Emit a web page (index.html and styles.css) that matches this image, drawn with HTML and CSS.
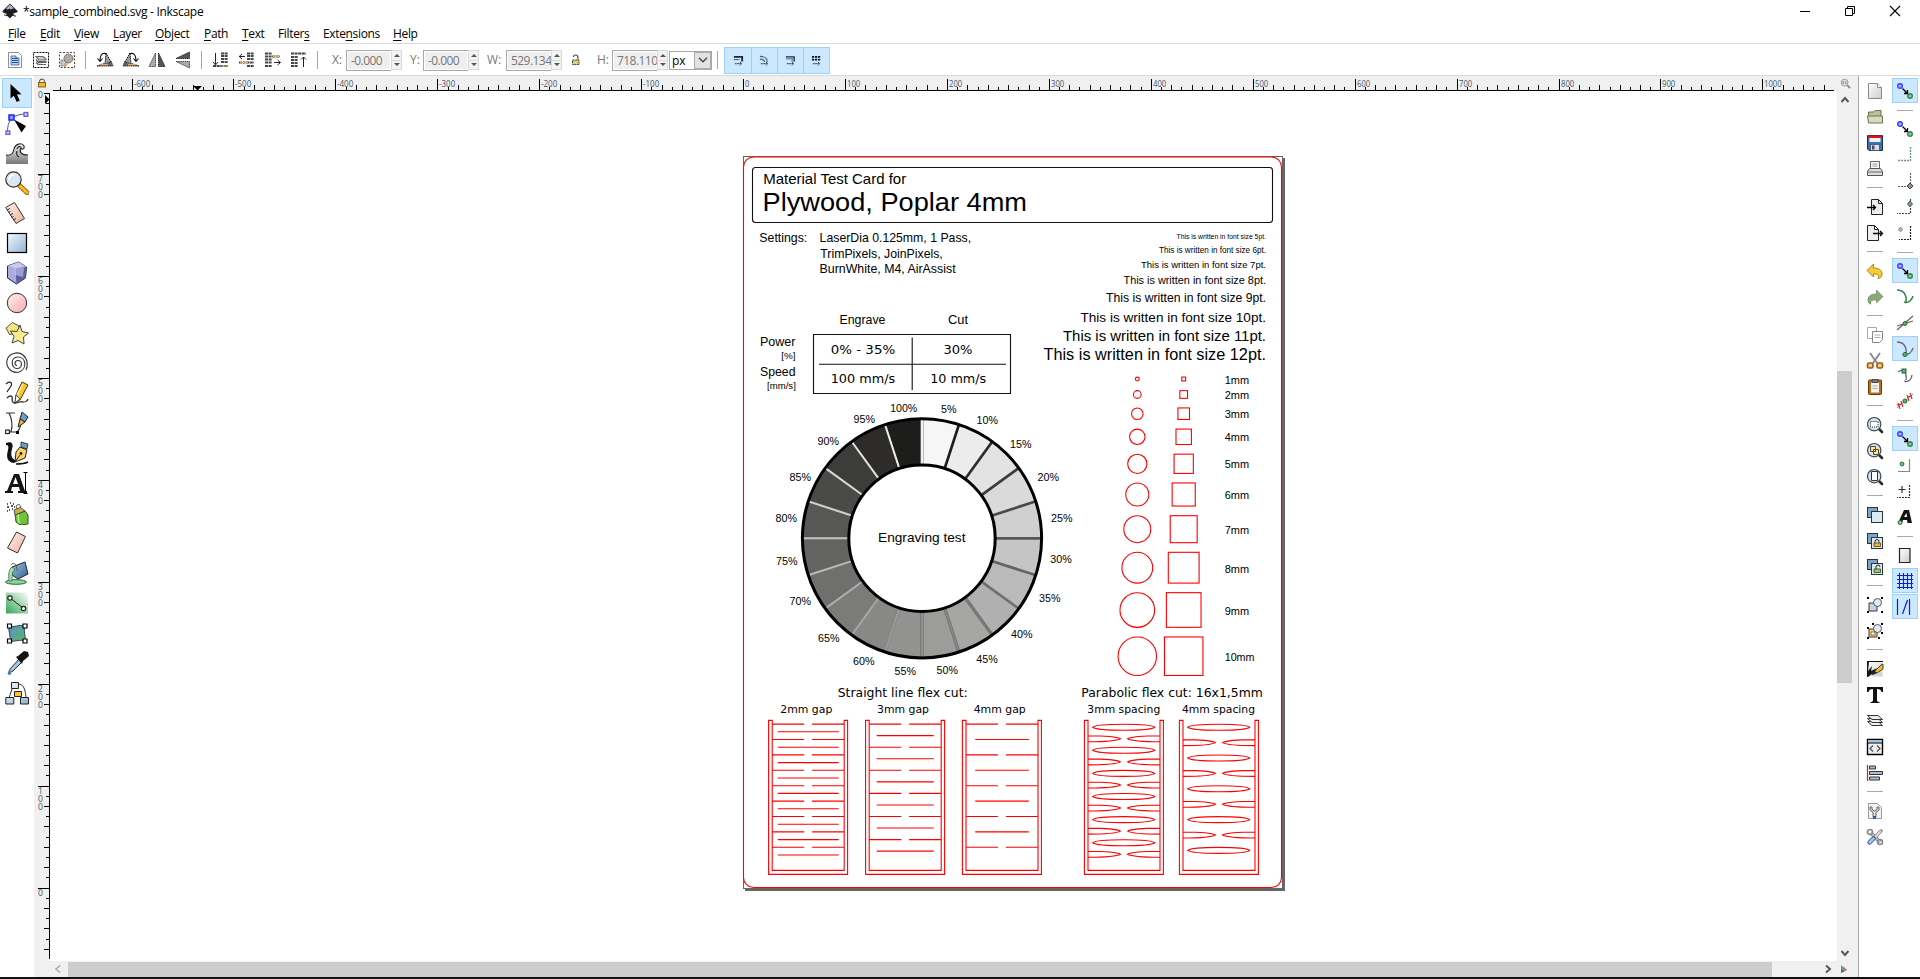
FILE: index.html
```html
<!DOCTYPE html>
<html lang="en">
<head>
<meta charset="utf-8">
<title>*sample_combined.svg - Inkscape</title>
<link rel="stylesheet" href="styles.css">
</head>
<body>
<svg class="defs" width="0" height="0">
  <defs>
    <linearGradient id="gBlue" x1="0" y1="0" x2="1" y2="1"><stop offset="0" stop-color="#f4f9fd"/><stop offset="1" stop-color="#8fb2d2"/></linearGradient>
    <linearGradient id="gSteel" x1="0" y1="0" x2="1" y2="1"><stop offset="0" stop-color="#9cc4e4"/><stop offset="1" stop-color="#2e5f8a"/></linearGradient>
    <linearGradient id="gPink" x1="0" y1="0" x2="1" y2="1"><stop offset="0" stop-color="#fff0f0"/><stop offset="1" stop-color="#f9a9b0"/></linearGradient>
    <linearGradient id="gPeach" x1="0" y1="0" x2="1" y2="1"><stop offset="0" stop-color="#fff3ef"/><stop offset="1" stop-color="#eeb09c"/></linearGradient>
    <linearGradient id="gGreen" x1="1" y1="0" x2="0" y2="1"><stop offset="0" stop-color="#fff"/><stop offset="1" stop-color="#35a555"/></linearGradient>
    <linearGradient id="gMesh" x1="0" y1="0" x2="1" y2="1"><stop offset="0" stop-color="#5d8fc4"/><stop offset="1" stop-color="#5bb86b"/></linearGradient>
    <linearGradient id="gGray" x1="0" y1="0" x2="0" y2="1"><stop offset="0" stop-color="#eee"/><stop offset="1" stop-color="#777"/></linearGradient>
    <linearGradient id="gPage" x1="0" y1="0" x2="1" y2="1"><stop offset="0" stop-color="#fff"/><stop offset="1" stop-color="#ccc"/></linearGradient>
    <symbol id="snap" viewBox="0 0 18 18"><circle cx="4" cy="4" r="2.3" fill="#aab4ff" stroke="#3d3dff" stroke-width="1.4"/><circle cx="14" cy="14" r="2.3" fill="#8fc79b" stroke="#2c8a45" stroke-width="1.4"/><path d="M6.5 6.5 11 11M11.5 8v3.5H8" fill="none" stroke="#000" stroke-width="1.3"/></symbol>
    <symbol id="glass" viewBox="0 0 18 18"><path d="m12.5 12.5 3.5 3.5" stroke="#222a30" stroke-width="2.6" stroke-linecap="round"/><circle cx="8.2" cy="8.2" r="6.7" fill="#d8e6f2" stroke="#3a4650" stroke-width="1.2"/></symbol>
    <symbol id="rot" viewBox="0 0 18 18"><path d="M1 15h16l-2-5z" fill="#666" stroke="#222" stroke-width=".9" stroke-dasharray="1.5 .7"/><path d="M9 13 10 2l5 9z" fill="#999" stroke="#222" stroke-dasharray="1.5 .7"/><path d="M11 3C6 1 4 4 4 10M1.500 7.500 4 10.500l2.500-3" fill="none" stroke="#111" stroke-width="1.100"/><path d="M5 13.500h7" stroke="#e8b04c" stroke-width="1.500"/></symbol>
    <symbol id="flip" viewBox="0 0 18 18"><path d="M7.500 2v13.500H1z" fill="#aaa" stroke="#444" stroke-dasharray="1.5 .7"/><path d="M10.500 2v13.500H17z" fill="#555" stroke="#222" stroke-dasharray="1.5 .7"/></symbol>
    <symbol id="layers" viewBox="0 0 18 18"><rect x="1.500" y="1.500" width="10" height="10" fill="#7fa3c4" stroke="#26353f"/><rect x="5.500" y="5.500" width="11" height="11" fill="#dbe9f5" stroke="#26353f"/></symbol>
  </defs>
</svg>

<header class="titlebar">
  <svg class="logo" viewBox="0 0 16 16"><path d="M8 .5 15.500 8c.6 1-.5 1.500-2 1.800l-2.500 1 2 1.700-2.800.5L8 15.500l-2.300-2.200L3 12.800 5 11 1.500 9.700C.5 9 .2 8.500.8 7.800z" fill="#1d1d1f"/><path d="M8 1.500 4 5.800l2 .6 1.500-1L9 6.600l1.800-1 1.200-.2z" fill="#a8b8cc"/><path d="M12 13h2M2 12h1.500" stroke="#333"/></svg>
  <span class="title">*sample_combined.svg - Inkscape</span>
  <span class="winbtns">
    <svg viewBox="0 0 12 12"><path d="M1 6.500h10" stroke="#000"/></svg>
    <svg viewBox="0 0 12 12"><path d="M1.500 3.500h7v7h-7zM3.500 3.500v-2h7v7h-2" fill="none" stroke="#000"/></svg>
    <svg viewBox="0 0 12 12"><path d="m1 1 10 10M11 1 1 11" stroke="#000" stroke-width="1.100"/></svg>
  </span>
</header>

<nav class="menubar">
  <span><u>F</u>ile</span><span><u>E</u>dit</span><span><u>V</u>iew</span><span><u>L</u>ayer</span><span><u>O</u>bject</span><span><u>P</u>ath</span><span><u>T</u>ext</span><span>Filter<u>s</u></span><span>Exte<u>n</u>sions</span><span><u>H</u>elp</span>
</nav>

<section class="options">
  <svg class="oi" viewBox="0 0 18 18"><path d="M2.500 1.500h10l3 3v12h-13z" fill="#fff" stroke="#8a8f96"/><path d="M5 5h5v2h3v7H5z" fill="#bcd3f2" stroke="#2c5ea8" stroke-width=".8"/><path d="M6 7.500h6M6 9.500h6M6 11.500h6" stroke="#1d4fa0"/></svg>
  <svg class="oi" viewBox="0 0 18 18"><rect x="1.500" y="1.500" width="15" height="15" fill="none" stroke="#000" stroke-dasharray="2 1"/><path d="M4 5.500h7l3 2.500v1H7zM4 8.500l2 2h8v1H6zM4 11.500l2 2h8" fill="#ccc" stroke="#666" stroke-width="1.100"/></svg>
  <svg class="oi" viewBox="0 0 18 18"><rect x="1.500" y="1.500" width="15" height="15" fill="none" stroke="#8a3030" stroke-dasharray="2 1.500"/><path d="M3 15V9h5v6z" fill="#ccc" stroke="#666" stroke-dasharray="1.500 .7"/><circle cx="10.500" cy="7.500" r="4.500" fill="#aaa" stroke="#555" stroke-dasharray="1.500 .7"/><path d="M6 13h4" stroke="#e8b04c" stroke-width="1.500"/></svg>
  <i class="vs"></i>
  <svg class="oi"><use href="#rot"/></svg>
  <svg class="oi mirror"><use href="#rot"/></svg>
  <svg class="oi"><use href="#flip"/></svg>
  <svg class="oi quarter"><use href="#flip"/></svg>
  <i class="vs"></i>
  <svg class="oi" viewBox="0 0 18 18"><path d="M3.500 2v11M1 11l2.500 3L6 11" fill="none" stroke="#222"/><path d="M9 2.500h7M9 5h7M9 8h7M9 11h7M1 15h15" stroke="#444" stroke-width="2" stroke-dasharray="3 .6"/><path d="M9 15h6" stroke="#e8b04c"/></svg>
  <svg class="oi" viewBox="0 0 18 18"><path d="M1 5.500h6M4 3 1.200 5.500 4 8" fill="none" stroke="#222"/><path d="M9 2.500h7M9 5h7M9 8h7M1 11.500h15M9 15h7" stroke="#444" stroke-width="2" stroke-dasharray="3 .6"/><path d="M2 11.500h8" stroke="#e8b04c"/></svg>
  <svg class="oi" viewBox="0 0 18 18"><path d="M10 11.500h6M13.500 9l3 2.500-3 2.500" fill="none" stroke="#222"/><path d="M1 2.500h7M1 5.500h15M1 8.500h7M1 11.500h7M1 15h7" stroke="#444" stroke-width="2" stroke-dasharray="3 .6"/><path d="M9 5.500h6" stroke="#e8b04c"/></svg>
  <svg class="oi" viewBox="0 0 18 18"><path d="M13.500 16V6M11 8.500 13.500 6 16 8.500" fill="none" stroke="#222"/><path d="M1 2.500h15M1 6h7M1 9h7M1 12h7M1 15h7" stroke="#444" stroke-width="2" stroke-dasharray="3 .6"/></svg>
  <i class="vs"></i>
  <label class="lx">X:</label><span class="entry">-0.000</span><span class="spin"><i></i><i></i></span>
  <label class="ly">Y:</label><span class="entry">-0.000</span><span class="spin"><i></i><i></i></span>
  <label class="lw">W:</label><span class="entry">529.134</span><span class="spin"><i></i><i></i></span>
  <svg class="olock" viewBox="0 0 10 12"><path d="M2.500 3a2.200 2 0 0 1 4.400 0V5.500" fill="none" stroke="#444" stroke-width="1.200"/><path d="M1.500 6h6.500v4.500H1.500z" fill="#e0cf70" stroke="#444" stroke-dasharray="2 .7"/></svg>
  <label class="lh">H:</label><span class="entry">718.110</span><span class="spin"><i></i><i></i></span>
  <span class="combo"><b>px</b><em><svg viewBox="0 0 10 6"><path d="m1 .8 4 4 4-4" fill="none" stroke="#444" stroke-width="1.300"/></svg></em></span>
  <i class="vs v4"></i>
  <span class="toggles">
    <span><svg viewBox="0 0 12 12"><path d="M1 2h9v5" fill="none" stroke="#1c2733" stroke-width="2"/><path d="M1 5h6M2 9.500h7M7.500 7.500l2 2-2 2" fill="none" stroke="#1c2733" stroke-dasharray="2 .5"/></svg></span>
    <span><svg viewBox="0 0 12 12"><path d="M1 1.500c5 0 8 2 8 6M1 4.500c3 0 5 1 5 3" fill="none" stroke="#4c6074" stroke-width="1.200"/><path d="M2 9.500h7M7.500 7.500l2 2-2 2" fill="none" stroke="#1c2733" stroke-dasharray="2 .5"/></svg></span>
    <span><svg viewBox="0 0 12 12"><path d="M1 2h9v5" fill="none" stroke="#1c2733" stroke-width="1.500"/><path d="M1 3h8v4H7V5H1z" fill="#7894b0"/><path d="M2 9.500h7M7.500 7.500l2 2-2 2" fill="none" stroke="#1c2733" stroke-dasharray="2 .5"/></svg></span>
    <span><svg viewBox="0 0 12 12"><path d="M1 2h9M1 5h9" stroke="#111" stroke-width="2" stroke-dasharray="2.500 .8"/><path d="M2 9.500h7M7.500 7.500l2 2-2 2" fill="none" stroke="#1c2733" stroke-dasharray="2 .5"/></svg></span>
  </span>
</section>

<main class="work">
  <aside class="toolbox">
    <span class="tool on"><svg viewBox="0 0 24 24"><path d="M5.500 3v14.500l3.300-2.800 3 6.300 3-1.400-3-6 4.700-.4z" fill="#000"/></svg></span>
    <span class="tool"><svg viewBox="0 0 24 24"><path d="M2.500 20C3 11 5 4 20 3" fill="none" stroke="#555"/><path d="m9 8.500 12 6.500-4.500 6.500z" fill="#000"/><rect x="4" y="4" width="5" height="5" fill="#7fa0ff" stroke="#2020f0" stroke-width="1.500"/><rect x="19" y="1.500" width="3.800" height="3.800" fill="#ccd" stroke="#5a5af0" stroke-width="1.300"/><rect x="1" y="20" width="3.800" height="3.500" fill="#ccd" stroke="#5a5af0" stroke-width="1.300"/></svg></span>
    <span class="tool"><svg viewBox="0 0 24 24"><path d="M1 14c5 1 7-1 8-6 1-4 7-6 10-3 2 2 0 5-2 3-2 3 0 6 6 6v9H1z" fill="url(#gGray)"/><path d="M1 14c5 1 7-1 8-6 1-5 8-7 10-3 1 3-2 4-3 2-2 3-1 7 7 7M12 10c-1 3 0 5 2 6M12 8c1-3 4-3 4-1" fill="none" stroke="#222" stroke-width="1.100"/></svg></span>
    <span class="tool"><svg viewBox="0 0 24 24"><path d="m14.500 14.500 7.500 7" stroke="#9a6a10" stroke-width="5" stroke-linecap="round"/><path d="m15 15 7 6.500" stroke="#fbb829" stroke-width="3" stroke-linecap="round"/><circle cx="8.500" cy="8.500" r="7.700" fill="#dbe8f4" stroke="#333" stroke-width="1.200"/><path d="M4 9c0-3 2-5 5-5" fill="none" stroke="#fff" stroke-width="1.500"/></svg></span>
    <span class="tool"><svg viewBox="0 0 24 24"><path d="M.7 6.500 9.500 1.500l10 16-8.500 5z" fill="url(#gPeach)" stroke="#333"/><path d="m2 9 3-1.500M3.500 11.500l2-1M5 14l3-1.500M6.500 16.500l2-1M8 19l3-1.500" stroke="#333"/></svg></span>
    <span class="tool"><svg viewBox="0 0 24 24"><rect x="2.500" y="2.500" width="19" height="19" fill="url(#gBlue)" stroke="#000" stroke-width="1.200"/></svg></span>
    <span class="tool"><svg viewBox="0 0 24 24"><path d="m2.500 5 11-4 8 5-1 11-9 6-9-6z" fill="#aaaadf" stroke="#222250"/><path d="m2.500 5 8 2 11-1-8-5z" fill="#c8c8f0"/><path d="m10.500 7 11-1-1 11-9 6z" fill="#5c5c9e"/><path d="m9 5 10 2-1 9-8-2z" fill="#d6d6f2" opacity=".55"/></svg></span>
    <span class="tool"><svg viewBox="0 0 24 24"><circle cx="12" cy="12" r="9.700" fill="url(#gPink)" stroke="#333"/></svg></span>
    <span class="tool"><svg viewBox="0 0 24 24"><path d="M7.500 1.500 14 5l-1.500 7.500-8 1L1 7z" fill="#f5e680" stroke="#555"/><path d="m15 4 2 6.500 6.500 1.500-5 4 .5 7-6-3.500-6 2.500L9 15.500 5.500 10l6.500.5z" fill="#fbe98e" stroke="#444"/></svg></span>
    <span class="tool"><svg viewBox="0 0 24 24"><path d="M12 14.500c-3-.5-2.500-5 1-5 5 0 4.500 8-1 8C5.500 17.500 5.500 6.300 12.500 6c9-.4 10 12.500 1.500 15C5.500 23 .8 15 2 9.500 3.500 2 13 0 18 4c5 4 5 11 3 15" fill="none" stroke="#333" stroke-width="1.100"/></svg></span>
    <span class="tool"><svg viewBox="0 0 24 24"><path d="M1 3c3-3 7-2 5 2-1 2-3 4-4 6M2 17c4-4 6-2 5 2 0 3 3 4 7 2 4-1 7 2 9-3" fill="none" stroke="#222" stroke-width="1.200"/><path d="m17 1 6 3-8 15-5 3 1-8z" fill="#fbc52e" stroke="#4a3a10"/><path d="m11 14 4 4-5 4z" fill="#fff" stroke="#222" stroke-width=".7"/><path d="m18 3-6 11" stroke="#fff2b0" stroke-width="1.500"/></svg></span>
    <span class="tool"><svg viewBox="0 0 24 24"><path d="M1 2h9M4 2c3 6 4 12 2 19M3 21h9c3-3 4-7 3-10" fill="none" stroke="#333" stroke-width="1.200"/><path d="m17 1 6 5-3 5-5-3z" fill="#6d9cc8" stroke="#222"/><path d="m15 8 5 3-7 5z" fill="#eab33c" stroke="#222"/><rect x=".7" y="19" width="3.600" height="3.600" fill="#fff" stroke="#000"/><path d="M11 20h3v3h-3z" fill="#000"/></svg></span>
    <span class="tool"><svg viewBox="0 0 24 24"><path d="M1 2c5-2 8 0 6 6-2 7 0 10 5 12l-3 2C2 21 1 16 3 9c1-4 0-5-2-5z" fill="#111"/><path d="m16 1 7 2-1 5-6-2z" fill="#6d9cc8" stroke="#222" stroke-width=".8"/><path d="m15 6 7 3-2 8-10 4 1-10z" fill="#fbd268" stroke="#222"/><path d="m10 21 5-7" stroke="#222"/><circle cx="16" cy="12.500" r="1.400" fill="#222"/><path d="M11 23c5 0 8 0 12-2" fill="none" stroke="#111" stroke-width="1.500"/></svg></span>
    <span class="tool"><svg viewBox="0 0 24 24"><path d="M0 22v-2h2L9 3h5l6 17h2v2h-9v-2h2l-1-4H7l-1 4h2v2zM8 13h5l-2.400-7z" fill="#151515"/><path d="M18.500 1.500h4M18.500 22.500h4M20.500 2v20" stroke="#000"/></svg></span>
    <span class="tool"><svg viewBox="0 0 24 24"><path d="m10 14 10-4 3 4v9l-8 1-4-3z" fill="#6fc23c" stroke="#2e5d16"/><path d="m13 13 1 9" stroke="#b9ee8e" stroke-width="1.500"/><path d="m9 9 6-3 5 4-10 4z" fill="#c9ad4e" stroke="#333" stroke-width=".8"/><path d="m11 5 3-2 2 3-4 2z" fill="#eee" stroke="#333" stroke-width=".7"/><path d="M2 3h1M5 2h1M8 3h1M2 6h2M6 5h2M9 6h1M4 9h1M7 8h1M2 10h1" stroke="#222" stroke-width="1.500"/></svg></span>
    <span class="tool"><svg viewBox="0 0 24 24"><path d="m11.500 1 9 4.500-8 16.500-10-5z" fill="url(#gPeach)" stroke="#333"/></svg></span>
    <span class="tool"><svg viewBox="0 0 24 24"><ellipse cx="11" cy="21" rx="10.500" ry="2.300" fill="#8ed3a0" stroke="#23683a"/><path d="M7 6 20 1l3 12-10 5-6-4z" fill="url(#gSteel)" stroke="#223"/><path d="M6 4c3-4 6 0 6 6" fill="none" stroke="#555"/><path d="M7 6C4 8 3 13 4 20h3c0-5 0-9 3-12z" fill="#a8dcb4" stroke="#23683a" stroke-width=".7"/></svg></span>
    <span class="tool"><svg viewBox="0 0 24 24"><rect x="1" y="1.500" width="22" height="21" fill="url(#gGreen)"/><path d="m5 7 13 10" stroke="#222"/><circle cx="5" cy="7" r="2.200" fill="#fff" stroke="#222" stroke-width="1.200"/><circle cx="18.500" cy="17.500" r="2.200" fill="#fff" stroke="#222" stroke-width="1.200"/></svg></span>
    <span class="tool"><svg viewBox="0 0 24 24"><path d="M4 5c5 2 10-2 16 0-2 6 1 9 0 15-5-2-10 1-15 0 1-5-2-10-1-15z" fill="url(#gMesh)" stroke="#245"/><g fill="#fff" stroke="#000" stroke-width="1.200"><path d="M2.500 3h4v4h-4zM18 3h4v4h-4zM2.500 18h4v4h-4zM18 18h4v4h-4z"/></g></svg></span>
    <span class="tool"><svg viewBox="0 0 24 24"><path d="m14 8-9 10-2 5 5-3 9-9z" fill="#9cc4e4" stroke="#333"/><path d="m11 6 2-1 6-5 4 1 1 4-6 5-1 3z" fill="#151515"/><path d="M5 19c2 3 1 5-.5 5S2 22 5 19z" fill="#4f86bd"/></svg></span>
    <span class="tool"><svg viewBox="0 0 24 24"><path d="M8 5 4 17M13 3c5 0 7 4 8 13" fill="none" stroke="#333"/><g fill="url(#gBlue)" stroke="#222"><path d="M6.500 1.500h7v6h-7zM.8 16.500h8v6.500h-8zM15.500 16.500h8v6.500h-8z"/></g><path d="M9.500 10.500h7v5h-7z" fill="#fbc52e" stroke="#222"/></svg></span>
  </aside>

  <section class="desk">
    <svg class="hruler" id="hruler" viewBox="34 76 1803 15"></svg>
    <span class="corner"><svg viewBox="0 0 12 12"><circle cx="5" cy="5" r="3.800" fill="#ddd" stroke="#999"/><path d="m8 8 3 3" stroke="#888" stroke-width="2"/><path d="M3.500 3.500v3M6.500 3.500v3" stroke="#777"/></svg></span>
    <svg class="vruler" id="vruler" viewBox="34 91 16 870"></svg>
    <svg class="canvas" id="canvas" viewBox="50 91 1787 870"></svg>
    <div class="vscroll">
      <svg class="ar" viewBox="0 0 10 8"><path d="m1.500 6 3.500-4 3.500 4" fill="none" stroke="#555" stroke-width="1.900"/></svg>
      <i class="vthumb"></i>
      <svg class="ar" viewBox="0 0 10 8"><path d="m1.500 2 3.500 4 3.500-4" fill="none" stroke="#555" stroke-width="1.900"/></svg>
    </div>
    <div class="hscroll">
      <svg class="har" viewBox="0 0 8 10"><path d="M6 1.500 2 5l4 3.500" fill="none" stroke="#aaa" stroke-width="1.600"/></svg>
      <i class="hthumb"></i>
      <svg class="har" viewBox="0 0 8 10"><path d="m2 1.500 4 3.500-4 3.500" fill="none" stroke="#555" stroke-width="1.900"/></svg>
    </div>
    <span class="cms"><svg viewBox="0 0 10 10"><path d="M2 1v8l6-3z" fill="#5aa86a"/><path d="M2 5v4l4-2z" fill="#5560c0"/><path d="m5 3 3 3-3 1.500z" fill="#d07070"/></svg></span>
  </section>

  <aside class="commands">
    <svg viewBox="0 0 18 18"><path d="M2.500 1.500h9l4 4v11h-13z" fill="url(#gPage)" stroke="#888"/><path d="M11.500 1.500v4h4" fill="#fff" stroke="#888"/></svg>
    <svg viewBox="0 0 18 18"><path d="M2.500 15V4h5l1.500-1.500h6V8" fill="#b9c09a" stroke="#6c7452"/><path d="M1.500 8h15v7h-14z" fill="#d6dcb8" stroke="#6c7452"/></svg>
    <svg viewBox="0 0 18 18"><path d="M1.500 1.500h15v15H3l-1.500-1.500z" fill="#3f70ad" stroke="#16304f"/><path d="M3.500 2h11v6h-11z" fill="#f2f2f2"/><path d="M2 1.500h14v2.500H2z" fill="#d81818"/><path d="M4.500 10.500h9v6h-9z" fill="#ddd" stroke="#333" stroke-width=".6"/><path d="M6 11.500h2.500v4H6z" fill="#2d5282"/></svg>
    <svg viewBox="0 0 18 18"><path d="M4.500 9V1.500h9V9" fill="#fafafa" stroke="#666"/><path d="M6.500 4h5M6.500 6h5" stroke="#999"/><path d="M3.500 8.500h11l2 3v4h-15v-4z" fill="#ddd" stroke="#555"/><path d="M2 12h14" stroke="#666"/></svg>
    <hr>
    <svg viewBox="0 0 18 18"><path d="M5.500 1.500h7l4 4v11h-11z" fill="#eee" stroke="#222"/><path d="M12.500 1.500v4h4" fill="none" stroke="#222"/><path d="M1 9.500h8M7 7l2.500 2.500L7 12" fill="none" stroke="#000" stroke-width="1.300"/></svg>
    <svg viewBox="0 0 18 18"><path d="M1.500 1.500h7l4 4v11h-11z" fill="#eee" stroke="#222"/><path d="M8.500 1.500v4h4" fill="none" stroke="#222"/><path d="M7 9.500h9M14 7l2.500 2.500L14 12" fill="none" stroke="#000" stroke-width="1.300"/></svg>
    <hr>
    <svg viewBox="0 0 18 18"><path d="M1 8.500 7.500 2v4c5 0 9 2 8.500 6.500-.3 2.500-2 4-4 4 1.500-2.500 0-5-4.500-4.500V15z" fill="#f3cb3a" stroke="#a8861a"/></svg>
    <svg viewBox="0 0 18 18"><path d="M17 8.500 10.500 2v4C5.500 6 1.500 8 2 12.500c.3 2.500 1 3.500 3 3.500-1.500-2.500 1-4.500 5.500-4V15z" fill="#8aa878" stroke="#6b8a5c" stroke-dasharray="1 .5"/></svg>
    <hr>
    <svg viewBox="0 0 18 18"><path d="M1.500 1.500h9v11h-9z" fill="#fff" stroke="#aaa"/><path d="M6.500 5.500h10v8l-3 3h-7z" fill="#fff" stroke="#888"/><path d="M8.500 9h6M8.500 11.500h6" stroke="#aaa"/></svg>
    <svg viewBox="0 0 18 18"><path d="m4 1 7 10M14 1 7 11" stroke="#888" stroke-width="1.900"/><rect x="1.500" y="11" width="5.500" height="5" rx="1.500" fill="#f0c98c" stroke="#9a5f14" stroke-width="1.700"/><rect x="11" y="11" width="5.500" height="5" rx="1.500" fill="#f0c98c" stroke="#9a5f14" stroke-width="1.700"/></svg>
    <svg viewBox="0 0 18 18"><rect x="2.500" y="2" width="13" height="14.500" rx="1" fill="#b87317" stroke="#5e3a08"/><path d="M5 4.500h8v10H5z" fill="#f4f4f4"/><path d="M6 1.500h6v3H6z" fill="#777" stroke="#333" stroke-width=".7"/><path d="M6.500 8h5M6.500 10.500h5" stroke="#aaa"/></svg>
    <hr>
    <svg viewBox="0 0 18 18"><use href="#glass" width="18" height="18"/><rect x="4.500" y="5.500" width="7.500" height="5.500" fill="#fff" stroke="#222" stroke-dasharray="1 1"/></svg>
    <svg viewBox="0 0 18 18"><use href="#glass" width="18" height="18"/><path d="M4.500 4.500h5v5h-5zM7.500 7.500h5v5h-5z" fill="#fbe3a5" stroke="#5c4a18"/></svg>
    <svg viewBox="0 0 18 18"><use href="#glass" width="18" height="18"/><path d="M5.500 3.500h6v9h-6z" fill="#fff" stroke="#333"/></svg>
    <hr>
    <svg viewBox="0 0 18 18"><use href="#layers" width="18" height="18"/></svg>
    <svg viewBox="0 0 18 18"><use href="#layers" width="18" height="18"/><path d="M9 11V9.500a2 2 0 0 1 4 0V11" fill="none" stroke="#222"/><path d="M8 11h6.500v3.500H8z" fill="#f2b632" stroke="#5c4208" stroke-width=".8"/></svg>
    <svg viewBox="0 0 18 18"><use href="#layers" width="18" height="18"/><path d="M10 11V9a2 2 0 0 1 4 0" fill="none" stroke="#222"/><path d="M8 11h6.500v3.500H8z" fill="#8fcf6a" stroke="#23480f" stroke-width=".8"/></svg>
    <hr>
    <svg viewBox="0 0 18 18"><path d="M3 7h8v8H3z" fill="#c3d5e6" stroke="#334"/><circle cx="11.500" cy="6.500" r="4" fill="#dfe9f2" stroke="#556"/><path d="M1 1h2v2H1zM15 1h2v2h-2zM1 15h2v2H1zM15 15h2v2h-2z"/></svg>
    <svg viewBox="0 0 18 18"><path d="M3 7h8v8H3z" fill="#f5d36c" stroke="#433"/><circle cx="11.500" cy="6.500" r="4" fill="#dfe9f2" stroke="#556"/><path d="M5 10h4v3H5z" fill="#fff" stroke="#543" stroke-width=".7"/><path d="M1 5h2v2H1zM6 1h2v2H6zM15 1h2v2h-2zM1 15h2v2H1zM15 10h2v2h-2zM12 15h2v2h-2z"/></svg>
    <hr>
    <svg viewBox="0 0 18 18"><path d="M1.500 1.500h15v15h-15z" fill="url(#gPage)"/><path d="M1 17V1h16v1H3l-1 9 4-5-1 5 6-3-4 5-5 4z" fill="#151515"/><path d="m8 12 7-7 2-1v5l-6 4z" fill="#f2b632" stroke="#222" stroke-width=".8"/><path d="m5 14 4-3 2 2-4 2z" fill="#222"/></svg>
    <svg viewBox="0 0 18 18"><path d="M1 1h16v5h-1.500C15 4 14 3 11 3v11c0 1.500 1 2 2.500 2v1h-9v-1C6 16 7 15.500 7 14V3C4 3 3 4 2.500 6H1z" fill="#111"/></svg>
    <svg viewBox="0 0 18 18"><g fill="#eee" stroke="#333"><path d="M1.500 9.500H12l4.500 4H6z"/><path d="M1.500 6.500H12l4.500 4H6z"/><path d="M1.500 3.500H12l4.500 4H6z"/></g></svg>
    <svg viewBox="0 0 18 18"><path d="M1.500 1.500h15v15h-15z" fill="#eee" stroke="#000" stroke-width="1.400"/><path d="M2 2h14v2.500H2z" fill="#9fc3e3"/><path d="M2 5h14" stroke="#000"/><path d="M7 7.500 4 10.500l3 3M11 7.500l3 3-3 3" fill="none" stroke="#555" stroke-width="1.300"/></svg>
    <svg viewBox="0 0 18 18"><path d="M1.500 1v16" stroke="#d81818" stroke-width="1.200"/><g fill="#a9c0d6" stroke="#333"><path d="M3.500 2h6v3h-6zM3.500 7.500h13v3h-13zM3.500 13h10v3h-10z"/></g></svg>
    <hr>
    <svg viewBox="0 0 18 18"><path d="M2.500 1.500h9l4 4v11h-13z" fill="#f4f4f4" stroke="#999"/><path d="M4 5v3l3 2.500V15h3v-4.500L13 8V5h-2v2.500L8.500 9 6 7.500V5z" fill="#ddd" stroke="#666"/><path d="M7 14h3v3H7z" fill="#2f5fa8"/></svg>
    <svg viewBox="0 0 18 18"><path d="m5 5 9 9" stroke="#777" stroke-width="3.500"/><path d="m5 5 9 9" stroke="#ccc" stroke-width="1.800"/><circle cx="4" cy="4" r="2.500" fill="none" stroke="#888" stroke-width="1.600"/><circle cx="14" cy="14" r="2.500" fill="none" stroke="#888" stroke-width="1.600"/><path d="m9 9 6-6" stroke="#888" stroke-width="3.500" stroke-linecap="round"/><path d="m9 9 6-6" stroke="#ddd" stroke-width="2"/><path d="m3.500 14.500 4-4" stroke="#2f5fa8" stroke-width="4.500" stroke-linecap="round"/><path d="m3.500 14.500 4-4" stroke="#a9c4ea" stroke-width="2.500" stroke-linecap="round"/></svg>
  </aside>

  <aside class="snapbar">
    <span class="sn on"><svg><use href="#snap"/></svg></span>
    <hr>
    <span class="sn"><svg><use href="#snap"/></svg></span>
    <span class="sn"><svg viewBox="0 0 18 18"><path d="M14.500 1v13.500H1" fill="none" stroke="#6f9a78" stroke-width="1.400" stroke-dasharray="2 1"/></svg></span>
    <span class="sn"><svg viewBox="0 0 18 18"><path d="M14.500 1v13.500H1" fill="none" stroke="#666" stroke-width="1.200" stroke-dasharray="2 1"/><path d="m14 11 3 3-3 3-3-3z" fill="#7d9a84" stroke="#445"/></svg></span>
    <span class="sn"><svg viewBox="0 0 18 18"><path d="M14.500 1v14.500H1" fill="none" stroke="#444" stroke-width="1.200" stroke-dasharray="2 1"/><path d="m14 3 2.500 3-2.500 3-2.500-3z" fill="#7d9a84" stroke="#566"/></svg></span>
    <span class="sn"><svg viewBox="0 0 18 18"><path d="M14.500 2v13.500H3" fill="none" stroke="#222" stroke-width="1.200" stroke-dasharray="2 1"/><circle cx="4.500" cy="5.500" r="1.700" fill="#b8d0be" stroke="#5d8568"/></svg></span>
    <hr>
    <span class="sn on"><svg><use href="#snap"/></svg></span>
    <span class="sn"><svg viewBox="0 0 18 18"><path d="M1 2c6 0 10 4 9 12M8 14c4 2 8-2 9-6" fill="none" stroke="#2c8a45" stroke-width="1.500"/></svg></span>
    <span class="sn"><svg viewBox="0 0 18 18"><path d="M1 16 17 2M1 12l16-5" stroke="#666" stroke-width="1.300"/><circle cx="9" cy="9.500" r="2" fill="#5fae72" stroke="#1f6a34"/></svg></span>
    <span class="sn on"><svg viewBox="0 0 18 18"><path d="M1 2c6 0 10 4 9 12M8 14c4 2 8-2 9-6" fill="none" stroke="#667" stroke-width="1.300"/><circle cx="9" cy="14.500" r="2.100" fill="#5fae72" stroke="#1f6a34"/></svg></span>
    <span class="sn"><svg viewBox="0 0 18 18"><path d="M2 6c5-4 9 0 8 8M8 15c4 2 8-2 8-6" fill="none" stroke="#667" stroke-width="1.300"/><rect x="6" y="3" width="4" height="4" fill="#5fae72" stroke="#1f6a34"/></svg></span>
    <span class="sn"><svg viewBox="0 0 18 18"><path d="M1 16 17 2" stroke="#888"/><path d="m2 11 2 6M5 9l2 6M11 3l2 6M14 1l2 6M1 13l5-1M11 5l5-1" stroke="#d02828" stroke-width="1.100"/><circle cx="9" cy="9" r="2" fill="#5fae72" stroke="#1f6a34"/></svg></span>
    <hr>
    <span class="sn on"><svg><use href="#snap"/></svg></span>
    <span class="sn"><svg viewBox="0 0 18 18"><path d="M13.500 3v12.500H2" fill="none" stroke="#888" stroke-width="1.200"/><circle cx="6" cy="8" r="1.900" fill="#7fc08f" stroke="#1f6a34"/></svg></span>
    <span class="sn"><svg viewBox="0 0 18 18"><path d="M13.500 3v12.500H1" fill="none" stroke="#333" stroke-width="1.200" stroke-dasharray="2 1"/><path d="M6 4v7M2.500 7.500h7" stroke="#333" stroke-width="1.200"/></svg></span>
    <span class="sn"><svg viewBox="0 0 18 18"><path d="M2 15 8 2h5l3 13h-4.500l-.5-3H7l-1 3zM8 9h3l-.5-4z" fill="#151515"/><circle cx="4" cy="14.500" r="2" fill="#8fd29f" stroke="#1f6a34"/></svg></span>
    <hr>
    <span class="sn"><svg viewBox="0 0 18 18"><path d="M3.500 2.500h10.500v14H3.500z" fill="url(#gPage)" stroke="#222" stroke-width="1.200"/></svg></span>
    <span class="sn on"><svg viewBox="0 0 18 18"><path d="M3.500 1v16M7.500 1v16M11.500 1v16M15.500 1v16M1 3.500h16M1 7.500h16M1 11.500h16M1 15.500h16" stroke="#0c1ce8" stroke-width="1.100"/></svg></span>
    <span class="sn on"><svg viewBox="0 0 18 18"><path d="M1.500 1v16M13.500 1v16M11.500 2l-5 14" stroke="#0c1ce8" stroke-width="1.200"/></svg></span>
  </aside>
</main>
<footer class="edge"></footer>
<script src="script.js"></script>
</body>
</html>
```
FILE: styles.css
```css
* { box-sizing: border-box; }
body {
  margin: 0;
  width: 1920px;
  height: 979px;
  overflow: hidden;
  display: flex;
  flex-direction: column;
  background: #fff;
  color: #000;
  font: 12px/16px "Open Sans", "Noto Sans", sans-serif;
}
svg { display: block; }
.defs { position: absolute; }

.titlebar { height: 24px; display: flex; align-items: center; padding: 0 19px 3px 2px; flex: none; }
.logo { width: 16px; height: 16px; }
.title { margin-left: 5px; letter-spacing: -0.28px; padding-top: 3px; }
.winbtns { margin-left: auto; display: flex; gap: 33px; }
.winbtns svg { width: 12px; height: 12px; }

.menubar {
  height: 20px;
  flex: none;
  display: grid;
  grid-template-columns: 32px 34px 39px 42px 49px 38px 36px 45px 70px 40px;
  padding: 2px 0 0 8px;
  border-bottom: 1px solid #dadada;
  letter-spacing: -0.35px;
}
.menubar u { text-underline-offset: 2px; }

.options { height: 32px; flex: none; display: flex; align-items: center; padding: 1px 0 0 6px; border-bottom: 1px solid #dadada; }
.oi { width: 18px; height: 18px; margin-right: 8px; flex: none; }
.mirror { transform: scaleX(-1); }
.quarter { transform: rotate(-90deg); }
.vs { width: 1px; height: 18px; background: #a5a5a5; margin: 0 10px 0 1px; flex: none; }
.options label { color: #777; flex: none; }
.lx { width: 14px; margin-left: 4px; }
.ly { width: 13px; margin-left: 8px; }
.lw { width: 19px; margin-left: 8px; }
.lh { width: 15px; margin-left: 16px; }
.entry {
  width: 45px; height: 21px; flex: none;
  border: 1px solid #a8a8a8; border-right: 0;
  box-shadow: inset 0 0 0 1px #fff;
  background: #efefef; color: #777;
  line-height: 20px; padding-left: 4px; letter-spacing: -0.55px; overflow: hidden; white-space: nowrap;
}
.spin { width: 11px; height: 20px; display: flex; flex-direction: column; background: #f3f3f3; border: 1px solid #d9d9d9; flex: none; }
.spin i { flex: 1; display: flex; align-items: center; justify-content: center; }
.spin i + i { border-top: 1px solid #d9d9d9; }
.spin i::before { content: ""; border: 3px solid transparent; border-top: 0; border-bottom: 3px solid #555; }
.spin i + i::before { border-bottom: 0; border-top: 3px solid #555; }
.olock { width: 10px; height: 12px; margin-left: 9px; flex: none; }
.combo { width: 43px; height: 19px; border: 1px solid #a8a8a8; display: flex; flex: none; margin-left: 1px; }
.combo b { font-weight: 400; flex: 1; padding-left: 2px; line-height: 18px; }
.combo em { width: 17px; background: #e1e1e1; border: 1px solid #adadad; display: grid; place-items: center; }
.combo svg { width: 10px; height: 6px; }
.v4 { margin: 0 6px 0 5px; }
.toggles { display: flex; border: 1px solid #99d1ff; background: #cce8ff; height: 27px; }
.toggles span { width: 26px; display: grid; place-items: center; }
.toggles span + span { border-left: 1px solid #99d1ff; }
.toggles svg { width: 11px; height: 11px; }

.work { flex: 1; display: flex; min-height: 0; }
.toolbox { width: 34px; padding: 2px 0 0 2px; flex: none; }
.tool { width: 30px; height: 30px; display: grid; place-items: center; border: 1px solid transparent; }
.tool svg { width: 24px; height: 24px; }
.tool.on { background: #cce8ff; border-color: #99d1ff; }

.desk { display: grid; grid-template: 15px 870px 16px / 16px 1787px 21px; flex: none; background: #f0f0f0; }
.hruler { grid-column: 1 / 3; width: 1803px; height: 15px; }
.corner { display: grid; place-items: center; padding: 0 4px 0 0; }
.corner svg { width: 11px; height: 11px; }
.vruler { width: 16px; height: 870px; overflow: visible; }
.canvas { width: 1787px; height: 870px; background: #fff; }
.vscroll { display: flex; flex-direction: column; padding: 5px 6px 4px 0; }
.ar { width: 10px; height: 8px; margin: 0 auto; flex: none; }
.vthumb { height: 312px; background: #cdcdcd; margin: 267px 0 auto; }
.hscroll { grid-column: 1 / 3; display: flex; align-items: center; padding: 0 5px 0 20px; }
.har { width: 8px; height: 10px; flex: none; }
.hthumb { width: 1704px; height: 15px; background: #cdcdcd; margin: 0 auto 0 6px; }
.cms { display: grid; place-items: center; padding-right: 8px; }
.cms svg { width: 10px; height: 10px; }

.commands, .snapbar { display: flex; flex-direction: column; flex: none; }
.commands { width: 34px; border-left: 1px solid #a5a5a5; padding: 6px 0 0 7px; }
.commands svg { width: 18px; height: 18px; margin: 0 0 8px; flex: none; }
.commands hr, .snapbar hr { width: 16px; height: 1px; border: 0; background: #a8a8a8; flex: none; }
.commands hr { margin: 1px 0 10px 1px; }
.snapbar { width: 27px; padding-top: 2px; }
.snapbar hr { margin: 6px 5px 5px; }
.sn { width: 26px; height: 26px; display: grid; place-items: center; border: 1px solid transparent; flex: none; }
.sn svg { width: 18px; height: 18px; }
.sn.on { background: #cce8ff; border-color: #99d1ff; height: 25px; margin-bottom: 1px; }

.edge { height: 2px; flex: none; background: #111; }

.rule { font: 8.500px "Open Sans", sans-serif; fill: #44566c; }
.red { fill: none; stroke: #f00; stroke-width: 1.1; }
.ink { fill: none; stroke: #111; stroke-width: 1.1; }
.arial { font-family: "Liberation Sans", Arial, sans-serif; fill: #000; }
.verdana { font-family: "DejaVu Sans", Verdana, sans-serif; fill: #000; }
```
FILE: script.js
```js
const SCALE = 1.0193;
const r1 = n => Math.round(n * 10) / 10;

/* rulers */
function buildHorizontal() {
  let path = '', labels = '';
  for (let u = -670; u <= 1070; u += 10) {
    const x = Math.floor(743.6 + u * SCALE) + 0.5;
    if (x < 51 || x > 1834) continue;
    const top = u % 100 === 0 ? 79 : u % 20 === 0 ? 85 : 87;
    path += `M${x} ${top}V90`;
    if (u % 100 === 0) labels += `<text class="rule" x="${x + 1.5}" y="87" textLength="${String(Math.abs(u)).length * 4.4 + (u < 0 ? 3 : 0)}" lengthAdjust="spacingAndGlyphs">${u}</text>`;
  }
  return `<rect x="34" y="76" width="1803" height="15" fill="#f0f0f0"/><path d="${path}M53 90.500H1834" stroke="#000" fill="none"/>${labels}
    <path d="M193 86h9l-4.500 4.500z"/>
    <path d="M39.500 83v-1.500a2.500 2.500 0 0 1 5 0V83" fill="none" stroke="#444"/><rect x="38.500" y="82.500" width="7" height="4.500" fill="#f2b632" stroke="#6b4c08" stroke-width=".8"/>`;
}
function buildVertical() {
  let path = '', labels = '';
  for (let u = -70; u <= 790; u += 10) {
    const y = Math.floor(888.1 - u * SCALE) + 0.5;
    if (y < 92 || y > 958) continue;
    const left = u % 100 === 0 ? 38 : u % 20 === 0 ? 44 : 46;
    path += `M${left} ${y}H49`;
    if (u % 100 === 0) [...String(u)].forEach((c, i) => { labels += `<text class="rule" x="38" y="${y + 7.5 + i * 8}">${c}</text>`; });
  }
  return `<rect x="34" y="91" width="16" height="870" fill="#f0f0f0"/><path d="${path}M49.500 93V959" stroke="#000" fill="none"/><text class="rule" x="38" y="97.500">0</text>${labels}<path d="M45 95v9l4.500-4.500z"/>`;
}

/* test card */
const out = [];
const text = (s, x, y, size, width, cls = 'arial', anchor = 'start') =>
  out.push(`<text class="${cls}" x="${r1(x)}" y="${r1(y)}" font-size="${size}" text-anchor="${anchor}"${width ? ` textLength="${width}" lengthAdjust="spacingAndGlyphs"` : ''}>${s}</text>`);

out.push('<path d="M1282.500 158h2.500v733H745v-2.500h537.500z" fill="#666"/>');
out.push('<rect x="743.500" y="156.500" width="539" height="732" fill="#fff" stroke="#666"/>');
out.push('<rect class="red" x="743.500" y="157" width="538" height="730.500" rx="10"/>');
out.push('<rect class="ink" x="752.500" y="167.500" width="520" height="55" rx="3"/>');
text('Material Test Card for', 763.2, 184.3, 14.4, 143);
text('Plywood, Poplar 4mm', 762.5, 210.5, 26.6, 264.5);
text('Settings:', 759.3, 241.8, 12.2, 48);
text('LaserDia 0.125mm, 1 Pass,', 819.6, 242.3, 12.2, 151.5);
text('TrimPixels, JoinPixels,', 820.3, 257.6, 12.2, 122.5);
text('BurnWhite, M4, AirAssist', 819.6, 272.9, 12.2, 136);
[[5, 238.6, 89.5], [6, 252.5, 107], [7, 268, 125], [8, 284.3, 142.500], [9, 302, 160], [10, 321.5, 185.500], [11, 340.5, 203], [12, 360.2, 222.5]]
  .forEach(([n, y, w]) => text(`This is written in font size ${n}pt.`, 1266, y, r1(n * 1.359), w, 'arial', 'end'));
text('Engrave', 839.5, 323.8, 12.2, 46);
text('Cut', 948, 323.8, 12.2, 20);
text('Power', 760, 345.8, 12.2, 35.5);
text('[%]', 781.3, 358.7, 9, 14.2);
text('Speed', 760, 375.8, 12.2, 35.5);
text('[mm/s]', 767, 388.7, 9, 28.8);
out.push('<path class="ink" d="M813.500 334.500h197v59h-197zM819 364.200h187M912.200 337.500v52.500"/>');
text('0% - 35%', 830.7, 353.9, 12.2, 64.5, 'verdana');
text('30%', 943.500, 353.9, 12.2, 29, 'verdana');
text('100 mm/s', 830.7, 382.9, 12.2, 64.5, 'verdana');
text('10 mm/s', 930.2, 382.9, 12.2, 56, 'verdana');

const CX = 922, CY = 538.3;
const shades = ['#f6f6f6', '#ececec', '#e3e3e3', '#dadada', '#d0d0d0', '#c5c5c5', '#bababa', '#b0b0b0', '#a6a6a4', '#9c9c9a', '#929291', '#888887', '#7b7b79', '#6f6f6e', '#636362', '#575755', '#4a4a48', '#3c3c3b', '#2d2c2b', '#1d1d1b'];
const at = (deg, r) => { const a = (deg - 90) * Math.PI / 180; return `${(CX + r * Math.cos(a)).toFixed(2)} ${(CY + r * Math.sin(a)).toFixed(2)}`; };
shades.forEach((c, i) => {
  const a = i * 18, b = a + 18;
  out.push(`<path fill="${c}" d="M${at(a, 73)}L${at(a, 120)}A120 120 0 0 1 ${at(b, 120)}L${at(b, 73)}A73 73 0 0 0 ${at(a, 73)}"/>`);
});
for (let k = 1; k <= 20; k++) {
  const edge = k >= 8 && k <= 10 ? '#6c6c6b' : k === 11 ? '#7a7a79' : k === 20 ? '#999' : null;
  const d = `M${at(k * 18, 74)}L${at(k * 18, 119)}`;
  if (edge) out.push(`<path d="${d}" stroke="${edge}" stroke-width="${k === 11 ? 2.6 : 3.2}"/>`);
  out.push(`<path d="${d}" stroke="${shades[20 - k]}" stroke-width="${edge ? 1.9 : k > 11 ? 2 : 2.7}"/>`);
}
out.push(`<circle cx="${CX}" cy="${CY}" r="119.600" fill="none" stroke="#000" stroke-width="3"/><circle cx="${CX}" cy="${CY}" r="73.200" fill="#fff" stroke="#000" stroke-width="3"/>`);
[[626, 88], [742, 121], [842, 191], [925, 291], [965, 415], [963, 537], [929, 655], [845, 763], [741, 838], [622, 871], [496, 874], [371, 843], [266, 775], [181, 663], [140, 542], [139, 415], [181, 291], [265, 182], [373, 117], [491, 85]]
  .forEach(([x, y], i) => text(`${(i + 1) * 5}%`, 740 + x / 3, 383.8 + y / 3, 10.7, [15.5, 21.5, 27][String((i + 1) * 5).length - 1], 'arial', 'middle'));
text('Engraving test', 878, 542.2, 13.4, 87.5);

[[379, 383.7], [394.5, 399], [413.7, 418], [436.8, 441.3], [463.8, 468.3], [494.5, 499], [529.2, 534], [567.7, 572.7], [610, 615], [656.2, 661.3]]
  .forEach(([cy, ty], i) => {
    const d = (i + 1) * 3.85;
    out.push(`<circle class="red" cx="1137.300" cy="${cy}" r="${d / 2}"/><rect class="red" x="${1183.7 - d / 2}" y="${cy - d / 2}" width="${d}" height="${d}"/>`);
    text(`${i + 1}mm`, 1224.7, ty, 10.7, i === 9 ? 29.8 : 24.3);
  });

text('Straight line flex cut:', 837.7, 697, 13, 130, 'verdana');
text('Parabolic flex cut: 16x1,5mm', 1081.3, 697, 13, 181.5, 'verdana');
[['2mm gap', 780.3, 52], ['3mm gap', 877, 52], ['4mm gap', 973.7, 52], ['3mm spacing', 1087.3, 73], ['4mm spacing', 1182, 73]]
  .forEach(([s, x, w]) => text(s, x, 713.3, 11.2, w, 'verdana'));

const frame = x => `M${x} 720.400V874.400h79V720.400h-3.400V870.400h-72V720.400z`;
let cuts = '';
[[768.6, 15.4, 9, 9, 61], [865.6, 23.1, 6, 6, 57], [962.4, 30.8, 5, 4, 53.6]].forEach(([x, pitch, pairs, mids, w]) => {
  cuts += frame(x);
  for (let i = 0; i < pairs; i++) cuts += `M${x + 3.6} ${724.1 + i * pitch}h32M${x + 43.5} ${724.1 + i * pitch}h32.100`;
  for (let i = 0; i < mids; i++) cuts += `M${x + 39.6 - w / 2} ${724.1 + (i + 0.5) * pitch}h${w}`;
});
[[1084.4, 23.1, 6, 6], [1179.4, 30.8, 5, 4]].forEach(([x, pitch, full, half]) => {
  cuts += frame(x);
  for (let i = 0; i < full; i++) {
    const y = 727.2 + i * pitch;
    cuts += `M${x + 8.3} ${y}c5-4 57-4 62 0c-5 4-57 4-62 0z`;
  }
  for (let i = 0; i < half; i++) {
    const y = 727.2 + (i + 0.5) * pitch;
    cuts += `M${x + 3.6} ${y - 3}c18 0 29 1 32.400 3c-3.400 2-14.400 3-32.400 3zM${x + 75.6} ${y - 3}c-18 0-29 1-32.400 3c3.400 2 14.400 3 32.400 3z`;
  }
});
out.push(`<path class="red" d="${cuts}"/>`);

document.getElementById('hruler').innerHTML = buildHorizontal();
document.getElementById('vruler').innerHTML = buildVertical();
document.getElementById('canvas').innerHTML = out.join('');
```
